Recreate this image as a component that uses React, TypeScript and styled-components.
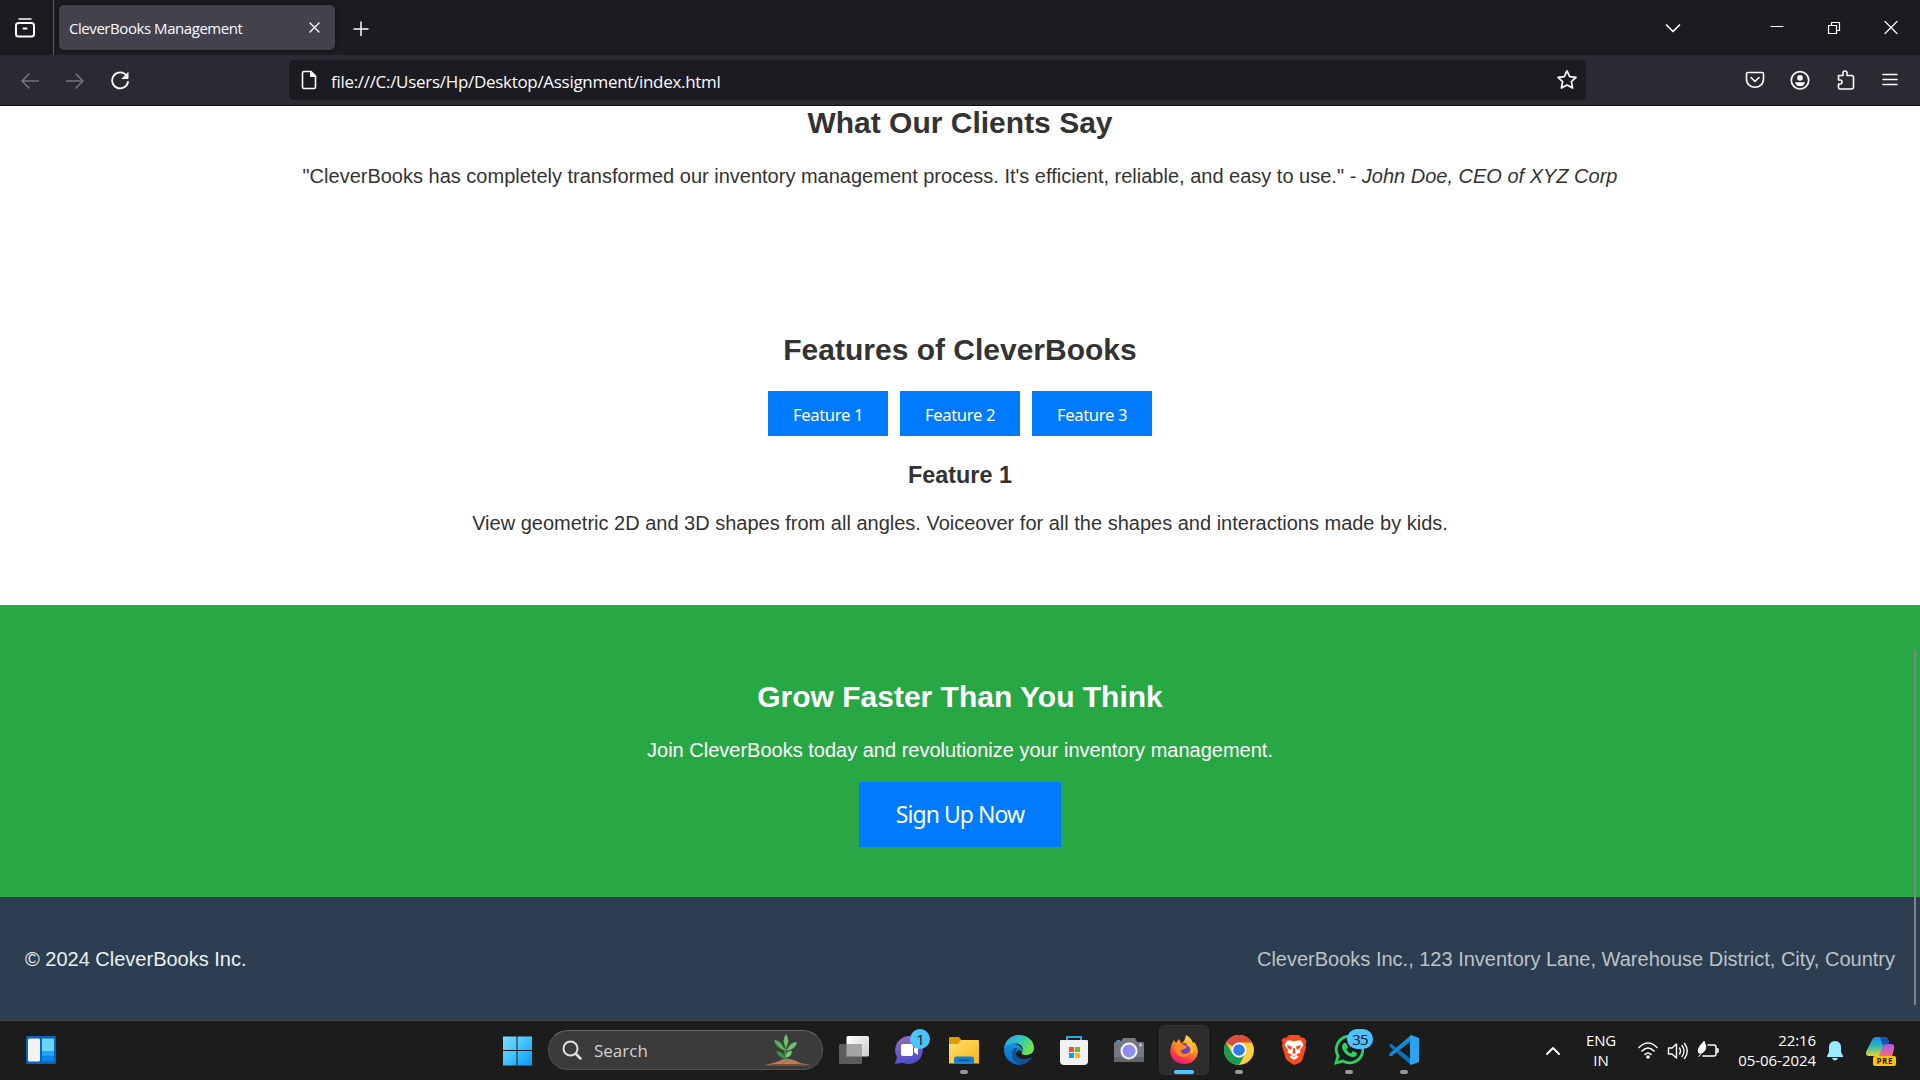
import React from "react";
import styled, { createGlobalStyle } from "styled-components";

const Global = createGlobalStyle`
  * { box-sizing: border-box; }
  body { margin: 0; background: #1c1b22; overflow: hidden; }
  button { border: 0; margin: 0; }
  svg { display: block; flex: none; }
`;
const ui = `"Open Sans", "Noto Sans", sans-serif`;
const tahoma = `"Noto Sans", "Open Sans", sans-serif`;

const Screen = styled.div`
  width: 1920px; height: 1080px; display: flex; flex-direction: column; overflow: hidden;
`;
const TabBar = styled.div`
  height: 55px; background: #1c1b22; display: flex; align-items: center; flex: none;
`;
const ViewButton = styled.div`
  width: 54px; height: 55px; border-right: 1px solid #5b5a63; display: flex; align-items: center; padding-left: 14px;
`;
const Tab = styled.div`
  width: 276px; height: 45px; margin-left: 5px; border-radius: 5px; background: #42414d; color: #fbfbfe;
  box-shadow: 0 0 4px rgba(0,0,0,.4); display: flex; align-items: center; justify-content: space-between; padding: 0 14px 0 10px;
`;
const Label = styled.span<{ $size: number; $ls?: number; $dy?: number }>`
  font-family: ${ui}; font-size: ${p => p.$size}px; letter-spacing: ${p => p.$ls ?? 0}px; line-height: 20px;
  padding-top: ${p => p.$dy ?? 0}px; white-space: nowrap;
`;
const NewTab = styled.div`margin-left: 18px;`;
const WindowControls = styled.div`
  margin-left: auto; display: flex; align-items: center; padding-right: 21px;
`;
const Gap = styled.div<{ $w: number }>`width: ${p => p.$w}px; flex: none;`;
const Toolbar = styled.div`
  height: 51px; flex: none; background: #2b2a33; border-bottom: 1px solid #0c0c0d; display: flex; align-items: center;
`;
const NavButtons = styled.div`
  width: 289px; display: flex; align-items: center; gap: 25px; padding-left: 20px;
`;
const UrlField = styled.div`
  width: 1297px; height: 40px; border-radius: 5px; background: #1c1b22; color: #fbfbfe; display: flex; align-items: center;
  padding: 0 8px 0 12px;
`;
const Grow = styled.div`flex: 1;`;
const ToolIcons = styled.div`
  margin-left: auto; display: flex; align-items: center; gap: 25.5px; padding-right: 21px;
`;

const Page = styled.main`
  height: 914px; flex: none; position: relative; background: #fff; color: #333;
  font-family: "Liberation Sans", Arial, sans-serif; text-align: center; display: flex; flex-direction: column;
`;
const H2 = styled.h2`margin: 0; font-size: 30px; line-height: 34px; font-weight: 700;`;
const H3 = styled.h3`margin: 21px 0 0; font-size: 23.4px; line-height: 36px; font-weight: 700;`;
const P = styled.p<{ $mt: number }>`
  margin: ${p => p.$mt}px 0 0; font-size: 20px; line-height: 24px;
`;
const Testimonials = styled.section`height: 227px;`;
const Features = styled.section`height: 272px;`;
const FeatureTabs = styled.div`display: flex; justify-content: center; gap: 12px; margin-top: 24px;`;
const FeatureButton = styled.button`
  width: 120px; height: 45px; padding: 1px 0 0; background: #007bff; color: #fff; font: 16.6px ${tahoma}; letter-spacing: -.35px;
`;
const CallToAction = styled.section`height: 292px; background: #28a745; color: #fff; padding-top: 75px;`;
const SignUp = styled.button`
  width: 202px; height: 65px; margin-top: 20px; padding: 0 0 1px; background: #007bff; color: #fff; font: 23px ${tahoma}; letter-spacing: -.95px;
`;
const Footer = styled.footer`
  flex: 1; background: #2c3e50; color: #ecf0f1; display: flex; align-items: center; justify-content: space-between;
  padding: 2px 25px 0; font-size: 20px;
`;
const Address = styled.span`color: #bdc3c7;`;
const ScrollThumb = styled.div`
  position: absolute; right: 4px; top: 544px; width: 2px; height: 355px; background: #838388;
`;

const Taskbar = styled.div`
  height: 60px; flex: none; background: #1c1c1c; border-top: 1px solid #464645; display: flex; align-items: center; color: #fff;
`;
const Widgets = styled.div`width: 502px; padding-left: 26px; padding-bottom: 1px;`;
const SearchBox = styled.div`
  width: 275px; height: 40px; margin-left: 16px; border-radius: 20px; background: #3b3b3b; border: 1px solid #505050;
  border-top-color: #6a6a6a; display: flex; align-items: center; padding: 0 10px 0 13px; color: #d2d2d2; margin-bottom: 1px;
`;
const Apps = styled.div`display: flex; margin-left: 6px; gap: 5px; margin-bottom: 1px;`;
const AppSlot = styled.div<{ $active?: boolean }>`
  width: 50px; height: 50px; border-radius: 6px; position: relative; display: flex; justify-content: center; padding-top: 10px;
  background: ${p => (p.$active ? "#2c2c2c" : "transparent")};
  box-shadow: ${p => (p.$active ? "inset 0 0 0 1px #343434" : "none")};
`;
const Running = styled.i<{ $active?: boolean }>`
  position: absolute; bottom: 1px; left: ${p => (p.$active ? 15 : 21)}px; width: ${p => (p.$active ? 20 : 8)}px; height: 4px;
  border-radius: 2px; background: ${p => (p.$active ? "#4cc2ff" : "#999")};
`;
const Badge = styled.b<{ $w: number; $x: number }>`
  position: absolute; top: 4px; left: ${p => p.$x}px; width: ${p => p.$w}px; height: 20px; border-radius: 10px; background: #4cc2ff;
  color: #10181d; font: 15px/20px ${ui}; text-align: center; letter-spacing: -.9px;
`;
const Tray = styled.div`margin-left: auto; display: flex; align-items: center; padding-right: 24px;`;
const Stack = styled.div<{ $w: number; $align: string }>`
  width: ${p => p.$w}px; display: flex; flex-direction: column; align-items: ${p => p.$align}; padding-bottom: 1px;
`;

type IconProps = { w: number; h?: number; sw?: number; c?: string; children: React.ReactNode };
const Icon = ({ w, h = w, sw = 1.5, c = "#fbfbfe", children }: IconProps) => (
  <svg width={w} height={h} viewBox={`0 0 ${w} ${h}`} fill="none" stroke={c} strokeWidth={sw} strokeLinecap="round" strokeLinejoin="round">{children}</svg>
);

const Plant = () => (
  <svg width="48" height="34" viewBox="0 0 48 34">
    <path d="M1 32Q10 30 15 28Q20 25 25 26Q32 27 36 30L47 32Z" fill="#b77b58" />
    <path d="M1 32L12 31H35L47 32L40 33H4Z" fill="#7f4b36" />
    <path d="M22 29Q21 18 22 11" stroke="#4d9a48" strokeWidth="2" fill="none" />
    <path d="M22 14Q17 8 22 1Q27 8 22 14Z" fill="#64b45b" />
    <path d="M21 18Q18 7 10 7Q12 15 21 18Z" fill="#4ba153" />
    <path d="M23 18Q25 9 33 9Q32 16 23 18Z" fill="#67b960" />
    <path d="M21 26Q20 18 12 18Q14 24 21 26Z" fill="#3f8f49" />
    <path d="M22 24Q22 17 28 18Q27 25 22 24Z" fill="#80c673" />
    <path d="M11 8L21 17M32 10L23 17M22 3V13" stroke="#a5d98c" strokeWidth=".7" />
  </svg>
);
const TaskView = () => (
  <svg width="30" height="30" viewBox="0 0 30 30">
    <defs><linearGradient id="tv" x2="1" y2="1"><stop stopColor="#fff" /><stop offset="1" stopColor="#ccc" /></linearGradient></defs>
    <rect x="7.500" y="1" width="22.500" height="20.500" rx="1.500" fill="url(#tv)" />
    <rect x="0" y="9" width="23" height="20" rx="1.500" fill="#5c5c5c" /><rect x="7.500" y="9" width="15.500" height="12.500" fill="#a4a4a4" />
  </svg>
);
const Chat = () => (
  <svg width="30" height="30" viewBox="0 0 30 30">
    <defs><linearGradient id="ch" x2=".3" y2="1"><stop stopColor="#9a6cc0" /><stop offset="1" stopColor="#4f50c8" /></linearGradient></defs>
    <path d="M15 1a14 14 0 1 1-6 26.700L1 29l2-7A14 14 0 0 1 15 1Z" fill="url(#ch)" />
    <rect x="7" y="9" width="12" height="12" rx="2" fill="#fff" /><path d="M20 13l4-3v10l-4-3Z" fill="#fff" />
  </svg>
);
const Folder = () => (
  <svg width="30" height="30" viewBox="0 0 30 30">
    <defs><linearGradient id="fo" x2="1" y2="1"><stop stopColor="#ffdf70" /><stop offset="1" stopColor="#f9b812" /></linearGradient></defs>
    <path d="M0 3q0-1 1-1h9l3 4v8H0Z" fill="#dd9b05" /><path d="M0 9h9l3-4h17q1 0 1 1v22.500H0Z" fill="url(#fo)" />
    <path d="M5 28.500v-5q0-2 2-2h16q2 0 2 2v5Z" fill="#1181d2" /><path d="M9 24.500h12v1.500H9Z" fill="#07579c" />
  </svg>
);
const Edge = () => (
  <svg width="30" height="30" viewBox="0 0 30 30">
    <defs>
      <linearGradient id="e1" y2=".4"><stop stopColor="#27a4e2" /><stop offset=".55" stopColor="#2fc5c0" /><stop offset="1" stopColor="#70e34f" /></linearGradient>
      <linearGradient id="e2" x2="0" y2="1"><stop stopColor="#1494df" /><stop offset="1" stopColor="#0765c4" /></linearGradient>
    </defs>
    <path d="M0 14C1 5 7 0 15 0c9 0 15 6 15 13 0 5-4 7-8 7-3 0-5-1-4-3 3-6-4-10-9-8-4 0-7 2-9 5Z" fill="url(#e1)" />
    <path d="M0 15c1-7 9-8 14-5 3 2 5 4 4 7-2-3-5-2-6 1-1 5 4 9 10 10-4 2-9 3-14 0C3 25 0 20 0 15Z" fill="url(#e2)" />
    <path d="M10 13c-5 7 0 16 7 16 5 0 9-3 11-6 0-1-1-1-2 0-8 3-15-1-14-6 0-2 1-3 2-4Z" fill="#125098" />
  </svg>
);
const Store = () => (
  <svg width="30" height="30" viewBox="0 0 30 30">
    <path d="M8 7V2h14v5" fill="none" stroke="#2ba8e8" strokeWidth="2" />
    <path d="M1 6q0-1 1-1h26q1 0 1 1v20q0 4-4 4H5q-4 0-4-4Z" fill="#f1f1f1" />
    <path d="M10 12h5v5h-5Z" fill="#f25022" /><path d="M16 12h5v5h-5Z" fill="#7fba00" /><path d="M10 18h5v5h-5Z" fill="#00a4ef" /><path d="M16 18h5v5h-5Z" fill="#ffb900" />
  </svg>
);
const Camera = () => (
  <svg width="30" height="30" viewBox="0 0 30 30">
    <defs><linearGradient id="ca" x2="1" y2="1"><stop stopColor="#6f9bee" /><stop offset=".5" stopColor="#a184ed" /><stop offset="1" stopColor="#53adf0" /></linearGradient></defs>
    <path d="M2 7q0-2 2-2h1q2 0 2 2Z" fill="#2aa7e8" />
    <path d="M0 8q0-1 1-1h6l2-4h12l2 4h6q1 0 1 1v19H0Z" fill="#747a80" /><path d="M0 22h30v5H0Z" fill="#60676d" />
    <circle cx="15" cy="16" r="8.500" fill="#f6f6f6" /><circle cx="15" cy="16" r="6.500" fill="url(#ca)" /><path d="M25 10h3M26.500 8.500v3" stroke="#ddd" />
  </svg>
);
const Firefox = () => (
  <svg width="30" height="30" viewBox="0 0 30 30">
    <defs><linearGradient id="ff" x1=".8" y1="0" x2=".3" y2="1"><stop stopColor="#fff04a" /><stop offset=".4" stopColor="#ff9a20" /><stop offset=".75" stopColor="#ff3b48" /><stop offset="1" stopColor="#e31587" /></linearGradient></defs>
    <path d="M17 0c4 2 6 5 7 8l1-1c9 11 1 22-10 22C5 29-1 21 2 12c0-3 2-5 3-7l2 3 3-4 2 4c3 0 4-4 5-8Z" fill="url(#ff)" />
    <circle cx="15" cy="15" r="7" fill="#7540c8" />
    <path d="M7 9c4-1 8 0 11 3-2 2-4 2-6 3-1 2 1 4 4 4 3 0 4-2 6-3-1 6-8 8-13 4-4-3-5-8-2-11Z" fill="#ff8a20" /><path d="M18 9c5 1 6 6 4 9" stroke="#ffb927" strokeWidth="3" fill="none" />
  </svg>
);
const Chrome = () => (
  <svg width="30" height="30" viewBox="0 0 30 30">
    <circle cx="15" cy="15" r="15" fill="#ffcd40" />
    <path d="M15 15L2 7.500A15 15 0 0 1 28 7.500H15Z" fill="#dd4b3e" />
    <path d="M2 7.500A15 15 0 0 0 15 30l6.500-11.500L8.500 18.700Z" fill="#179c52" />
    <circle cx="15" cy="15" r="7.500" fill="#fff" /><circle cx="15" cy="15" r="5.800" fill="#2e7cf0" />
  </svg>
);
const Brave = () => (
  <svg width="26" height="30" viewBox="0 0 26 30">
    <path d="M8 0h10l3 3 2-.500 2.500 4-1 3 .5 3-3.500 12q-1 2-3 3.500L13 30l-5.500-3.500Q5.500 25 4.500 23L1 11l.5-3-1-3L3 2.500l2 .500Z" fill="#fb4a1c" />
    <path d="M9.500 5.500L13 6.300l3.500-.8L20 5.500l2.500 4.500-3.500 5 .5 2.500-4.500 2 2.500 2.500-4.500 3-4.500-3 2.500-2.500-4.500-2 .5-2.500L3.500 10 6 5.500Z" fill="#fff" />
    <path d="M6 10l5 1.500-1 3.500-3-2ZM20 10l-5 1.500 1 3.500 3-2ZM12.200 13h1.600l.7 5-1.500 1-1.500-1ZM10.500 20l2.500 1 2.500-1-2.500 2Z" fill="#fb4a1c" />
  </svg>
);
const WhatsApp = () => (
  <svg width="30" height="30" viewBox="0 0 30 30">
    <path d="M2 28l2-7A13.300 13.300 0 1 1 9 26Z" fill="none" stroke="#25d366" strokeWidth="2.800" />
    <path d="M10 8l2 0 2 4-1.500 2.500c1 2 2.500 3 4.500 4L19 16l4 2c0 3-2 4-4 4-5 0-11-6-11-10 0-2 1-3 2-4Z" fill="#25d366" />
  </svg>
);
const VSCode = () => (
  <svg width="30" height="30" viewBox="0 0 30 30">
    <path d="M0 10l2-1.500 20 15.500V30L1 12Z" fill="#0b70b8" /><path d="M0 20l2 1.500L22 6V0L1 18Z" fill="#168bd2" />
    <path d="M22 0l8 3v24l-8 3-1-2V2Z" fill="#2ca4ee" />
  </svg>
);
const Copilot = () => (
  <svg width="30" height="30" viewBox="0 0 30 30">
    <defs>
      <linearGradient id="co" x2="0" y2="1"><stop stopColor="#1a8be8" /><stop offset=".45" stopColor="#25b7bd" /><stop offset="1" stopColor="#e5d431" /></linearGradient>
      <linearGradient id="cp" x2="0" y2="1"><stop stopColor="#a959ed" /><stop offset="1" stopColor="#ff697c" /></linearGradient>
    </defs>
    <path d="M6 4Q7 1 10 1h9q3 0 4 6-4 0-6 4l-3 9H3q-4 0-3-4Z" fill="url(#co)" /><path d="M14 1h5q3 0 4 6-5 0-6 3Z" fill="#194fb8" />
    <path d="M17 11q1-3 4-3h4q4 0 3 5l-2 8H12Z" fill="url(#cp)" />
    <rect x="7" y="20" width="23" height="10" rx="2" fill="#ffc400" />
    <text x="18.700" y="28" textAnchor="middle" fontFamily="Open Sans" fontWeight="700" fontSize="8" letterSpacing=".6" fill="#1c1c1c">PRE</text>
  </svg>
);

const apps: { icon: React.ReactNode; run?: boolean; active?: boolean; badge?: string }[] = [
  { icon: <TaskView /> }, { icon: <Chat />, badge: "1" }, { icon: <Folder />, run: true }, { icon: <Edge /> }, { icon: <Store /> },
  { icon: <Camera /> }, { icon: <Firefox />, run: true, active: true }, { icon: <Chrome />, run: true }, { icon: <Brave /> },
  { icon: <WhatsApp />, run: true, badge: "35" }, { icon: <VSCode />, run: true },
];

export default function App() {
  return (
    <Screen>
      <Global />
      <TabBar>
        <ViewButton><Icon w={22} sw={2}><rect x="2" y="6" width="18" height="13.500" rx="2.500" /><path d="M5 2h12" strokeWidth="1.500" /><path d="M9.500 11.500h3" /></Icon></ViewButton>
        <Tab><Label $size={15} $ls={-0.44} $dy={1}>CleverBooks Management</Label><Icon w={14} sw={1.4}><path d="M3 2l9 9M12 2l-9 9" /></Icon></Tab>
        <NewTab><Icon w={16} sw={1.5}><path d="M8 2v14M1 9h14" /></Icon></NewTab>
        <WindowControls>
          <Icon w={18} sw={1.7}><path d="M2.500 6l6.500 6.500L15.500 6" /></Icon><Gap $w={88} />
          <Icon w={14} sw={1.2}><path d="M1 5.500h12" /></Icon><Gap $w={43} />
          <Icon w={14} sw={1.2}><path d="M1.500 4.500h8v8h-8zM4.500 4.500v-3h8v8h-3" /></Icon><Gap $w={42} />
          <Icon w={16} sw={1.2}><path d="M2 1.500l12 12M14 1.500l-12 12" /></Icon>
        </WindowControls>
      </TabBar>
      <Toolbar>
        <NavButtons>
          <Icon w={20} c="#77767e"><path d="M18.500 11H2M9 4l-7 7 7 7" /></Icon>
          <Icon w={20} c="#77767e"><path d="M1.500 11H18M11 4l7 7-7 7" /></Icon>
          <Icon w={20} sw={1.8}><path d="M16.500 5.500A8 8 0 1 0 18 12" /><path d="M18 3v5.500h-5.500z" fill="#fbfbfe" strokeWidth="1" /></Icon>
        </NavButtons>
        <UrlField>
          <Icon w={16} h={20} sw={1.6}><path d="M3 1.500h7l4.500 4.500v11q0 1.500-1.500 1.500H3q-1.500 0-1.500-1.500V3q0-1.500 1.500-1.500Z" /><path d="M9.500 1.500v5h5z" fill="#fbfbfe" strokeWidth="1" /></Icon>
          <Gap $w={14} /><Label $size={17} $ls={-0.3} $dy={4}>file:///C:/Users/Hp/Desktop/Assignment/index.html</Label><Grow />
          <Icon w={22} sw={1.7}><path d="M11 1.800l2.700 5.800 6.300.800-4.600 4.300 1.200 6.400L11 16l-5.600 3.100 1.200-6.400L2 8.400l6.300-.800Z" /></Icon>
        </UrlField>
        <ToolIcons>
          <Icon w={20} sw={1.6}><path d="M3 2.500h14q1.500 0 1.500 1.500v5c0 11-17 11-17 0V4q0-1.500 1.500-1.500ZM6 7.500l4 4 4-4" /></Icon>
          <Icon w={20} sw={1.7}><circle cx="10" cy="10.300" r="8.700" /><circle cx="10" cy="7.800" r="2.900" fill="#fbfbfe" stroke="none" /><path d="M5 12.300h10q-1 4-5 4t-5-4Z" fill="#fbfbfe" stroke="none" /></Icon>
          <Icon w={20} sw={1.6}><path d="M2.500 5.500H7V3q0-2 2-2t2 2v2.500h4.500q2 0 2 2v9.500q0 2-2 2H4q-1.500 0-1.500-1.500V14H4q2 0 2-2t-2-2H2.500Z" /></Icon>
          <Icon w={18} sw={1.5}><path d="M2 3.500h14M2 8.500h14M2 13.500h14" /></Icon>
        </ToolIcons>
      </Toolbar>
      <Page>
        <Testimonials>
          <H2>What Our Clients Say</H2>
          <P $mt={24}>"CleverBooks has completely transformed our inventory management process. It's efficient, reliable, and easy to use." <em>- John Doe, CEO of XYZ Corp</em></P>
        </Testimonials>
        <Features>
          <H2>Features of CleverBooks</H2>
          <FeatureTabs>{["Feature 1", "Feature 2", "Feature 3"].map(f => <FeatureButton key={f}>{f}</FeatureButton>)}</FeatureTabs>
          <H3>Feature 1</H3>
          <P $mt={18}>View geometric 2D and 3D shapes from all angles. Voiceover for all the shapes and interactions made by kids.</P>
        </Features>
        <CallToAction>
          <H2>Grow Faster Than You Think</H2>
          <P $mt={24}>Join CleverBooks today and revolutionize your inventory management.</P>
          <SignUp>Sign Up Now</SignUp>
        </CallToAction>
        <Footer><span>© 2024 CleverBooks Inc.</span><Address>CleverBooks Inc., 123 Inventory Lane, Warehouse District, City, Country</Address></Footer>
        <ScrollThumb />
      </Page>
      <Taskbar>
        <Widgets>
          <svg width="30" height="28" viewBox="0 0 30 28"><rect width="30" height="28" rx="1.500" fill="#0b63b5" /><rect x="2" y="2.500" width="12" height="23" rx="1.500" fill="#f2f2f2" /><path d="M16 2.500h12V15H16z" fill="#67d5fb" /><path d="M16 15h12v5H16z" fill="#1ca4f8" /><path d="M16 20h12v5.500H16z" fill="#0785ee" /></svg>
        </Widgets>
        <svg width="30" height="30" viewBox="0 0 30 30"><defs><linearGradient id="wi" x2="1" y2="1"><stop stopColor="#7fdcff" /><stop offset=".5" stopColor="#3fc3fd" /><stop offset="1" stopColor="#0996f8" /></linearGradient></defs><path d="M1 .5h13.500V14H1zM15.500 .5H30V14H15.500zM1 15h13.500v14.500H1zM15.500 15H30v14.500H15.500z" fill="url(#wi)" /></svg>
        <SearchBox>
          <Icon w={20} sw={2} c="#dedede"><circle cx="8.500" cy="8.500" r="7" /><path d="M14 14l4.500 4.500" strokeWidth="2.500" /></Icon><Gap $w={12} />
          <Label $size={17} $dy={2}>Search</Label><Grow /><Plant />
        </SearchBox>
        <Apps>
          {apps.map((a, i) => (
            <AppSlot key={i} $active={a.active}>{a.icon}{a.run && <Running $active={a.active} />}{a.badge && <Badge $w={a.badge === "1" ? 20 : 26} $x={a.badge === "1" ? 26 : 23}>{a.badge}</Badge>}</AppSlot>
          ))}
        </Apps>
        <Tray>
          <Icon w={16} sw={2}><path d="M2 11l6-6 6 6" /></Icon><Gap $w={20} />
          <Stack $w={40} $align="center"><Label $size={15} $ls={-0.2}>ENG</Label><Label $size={15}>IN</Label></Stack><Gap $w={16} />
          <Icon w={22} h={20} sw={1.6}><path d="M2 6.500q9-9 18 0M5 10q6-6 12 0M8 13.500q3-3 6 0" /><circle cx="11" cy="16" r="1" fill="#fff" /></Icon><Gap $w={8} />
          <Icon w={22} h={20} sw={1.4}><path d="M1.500 7h3.500l4.500-4v14L5 13H1.500zM12.500 7q2 3 0 6M15 4.500q4 5.500 0 11M17.500 2.500q5.500 7.500 0 15" /></Icon><Gap $w={8} />
          <Icon w={22} h={20} sw={1.5}><path d="M11 4h6q2 0 2 2v7q0 2-2 2H6M19.500 8H21v3h-1.500" /><path d="M7 .5q3 6 1 8.500-2 4-6 3-3-4 5-11.500ZM2 15.500l5-8" fill="#fff" strokeWidth="1" /></Icon>
          <Stack $w={97} $align="flex-end"><Label $size={15} $ls={-0.1}>22:16</Label><Label $size={15} $ls={-0.05}>05-06-2024</Label></Stack><Gap $w={10} />
          <Icon w={18} h={20} c="none"><path d="M9 0c4 0 6 3 6 6v5l2 4v1H1v-1l2-4V6c0-3 2-6 6-6ZM6 17h6q-1 2.500-3 2.500T6 17Z" fill="#99ebff" /></Icon><Gap $w={22} />
          <Copilot />
        </Tray>
      </Taskbar>
    </Screen>
  );
}
